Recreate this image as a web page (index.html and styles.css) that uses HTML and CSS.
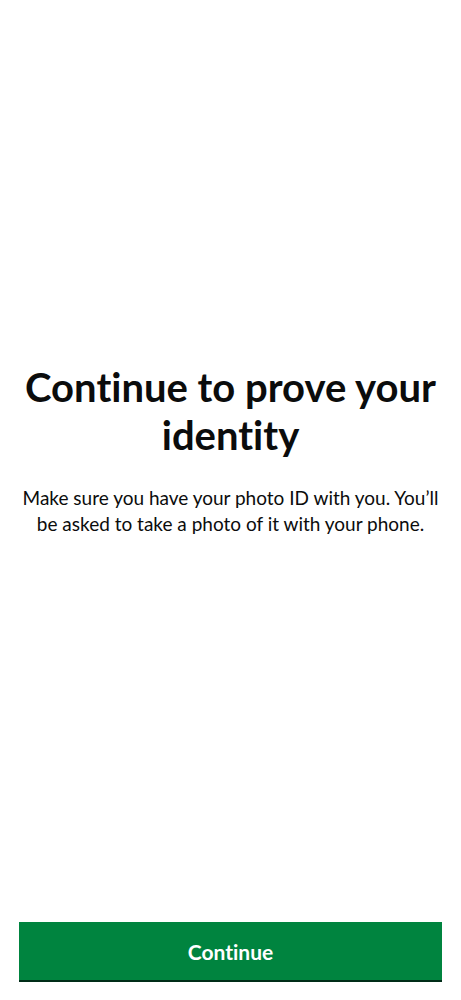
FILE: index.html
```html
<!DOCTYPE html>
<html>
<head>
<meta charset="utf-8">
<link rel="stylesheet" href="styles.css">
</head>
<body>
<main class="screen">
  <section class="content">
    <h1 class="title">Continue to prove your identity</h1>
    <p class="body">Make sure you have your photo ID with you. You’ll be asked to take a photo of it with your phone.</p>
  </section>
  <div class="actions">
    <button class="btn">Continue</button>
  </div>
</main>
</body>
</html>
```
FILE: styles.css
```css
html, body {
  margin: 0;
  padding: 0;
  background: #ffffff;
}
.screen {
  height: 1000px;
  display: flex;
  flex-direction: column;
  font-family: Lato, "Liberation Sans", sans-serif;
  font-variant-ligatures: none;
  color: #0b0c0c;
}
.content {
  flex: 1;
  display: flex;
  flex-direction: column;
  justify-content: center;
  padding: 0 14px 23px;
  text-align: center;
}
.title {
  font-size: 40px;
  line-height: 48px;
  font-weight: 700;
  margin: 0 0 26px;
}
.body {
  font-size: 19px;
  line-height: 26px;
  margin: 0;
  padding: 0 6px;
}
.actions {
  padding: 0 19px 18px;
}
.btn {
  display: block;
  width: 100%;
  height: 60px;
  background: #00843f;
  color: #ffffff;
  border: none;
  border-bottom: 2px solid #002d18;
  font-family: Lato, "Liberation Sans", sans-serif;
  font-variant-ligatures: none;
  font-weight: 700;
  font-size: 21px;
}
```
